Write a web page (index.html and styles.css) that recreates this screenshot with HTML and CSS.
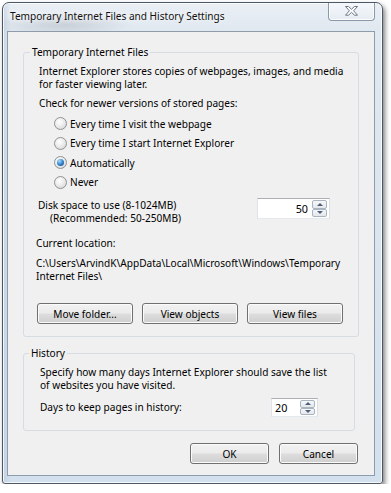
FILE: index.html
```html
<!DOCTYPE html>
<html lang="en">
<head>
<meta charset="utf-8">
<title>Temporary Internet Files and History Settings</title>
<link rel="stylesheet" href="styles.css">
</head>
<body>
<div class="window">
  <div class="titlebar">
    <span class="title">Temporary Internet Files and History Settings</span>
    <div class="close">
      <svg width="13" height="10" viewBox="0 0 13 10" aria-hidden="true">
        <polygon points="0.5,0.5 3.5,0.5 6.5,3.2 9.5,0.5 12.5,0.5 8.6,4.8 12.5,9.2 9.5,9.2 6.5,6.4 3.5,9.2 0.5,9.2 4.4,4.8" fill="#fff" stroke="#6b7585" stroke-width="1" stroke-linejoin="round"/>
      </svg>
    </div>
  </div>
  <div class="client">
    <fieldset class="group group-tif">
      <legend>Temporary Internet Files</legend>
      <div class="group-body tif-body">
        <p class="desc">Internet Explorer stores copies of webpages, images, and media<br>for faster viewing later.</p>
        <p class="check">Check for newer versions of stored pages:</p>
        <div class="radios">
          <div class="radio"><span class="dot"></span>Every time I visit the webpage</div>
          <div class="radio"><span class="dot"></span>Every time I start Internet Explorer</div>
          <div class="radio"><span class="dot on"></span>Automatically</div>
          <div class="radio"><span class="dot"></span>Never</div>
        </div>
        <div class="disk-row">
          <div class="disk-label">
            <div>Disk space to use (8-1024MB)</div>
            <div class="rec">(Recommended: 50-250MB)</div>
          </div>
          <div class="spin spin-disk">
            <span class="val">50</span>
            <span class="arrows"><span class="arrow up"></span><span class="arrow down"></span></span>
          </div>
        </div>
        <p class="loc-label">Current location:</p>
        <p class="path">C:\Users\ArvindK\AppData\Local\Microsoft\Windows\Temporary<br>Internet Files\</p>
        <div class="btn-row">
          <button class="btn wide">Move folder...</button>
          <button class="btn wide">View objects</button>
          <button class="btn wide">View files</button>
        </div>
      </div>
    </fieldset>
    <fieldset class="group group-hist">
      <legend>History</legend>
      <div class="group-body hist-body">
        <p class="desc">Specify how many days Internet Explorer should save the list<br>of websites you have visited.</p>
        <div class="days-row">
          <span class="days-label">Days to keep pages in history:</span>
          <div class="spin spin-days">
            <span class="val">20</span>
            <span class="arrows"><span class="arrow up"></span><span class="arrow down"></span></span>
          </div>
        </div>
      </div>
    </fieldset>
    <div class="actions">
      <button class="btn dlg">OK</button>
      <button class="btn dlg">Cancel</button>
    </div>
  </div>
</div>
</body>
</html>
```

FILE: styles.css
```css
* { box-sizing: border-box; }

body {
  margin: 0;
  background: #ffffff;
  font-family: "Noto Sans", "Open Sans", sans-serif;
  font-size: 10.1px;
  color: #000;
}

.window {
  margin: 2px 0 0 2px;
  width: 381px;
  height: 482px;
  border: 1px solid #4d5866;
  border-radius: 7px 7px 3px 3px;
  background:
    radial-gradient(ellipse 70px 12px at 60px 22px, rgba(150, 158, 168, 0.35), rgba(150, 158, 168, 0) 100%),
    linear-gradient(90deg, rgba(170, 190, 212, 0.45) 0, rgba(170, 190, 212, 0) 8px),
    linear-gradient(180deg, #eaeff5 0, #e0e8f0 28px, #d3e0ed 100%);
  box-shadow: 2px 3px 5px rgba(0, 0, 0, 0.5), inset 0 0 0 1px rgba(255, 255, 255, 0.8);
  padding: 0 7px 7px 4px;
  display: flex;
  flex-direction: column;
}

.titlebar {
  height: 28px;
  flex: none;
  display: flex;
  justify-content: space-between;
  align-items: flex-start;
}

.title {
  padding-left: 3px;
  line-height: 26px;
  font-size: 10.1px;
  color: #111;
  text-shadow: 0 0 5px #fff, 0 0 9px rgba(255, 255, 255, 0.9);
}

.close {
  width: 47px;
  height: 18px;
  border: 1px solid #8c99a8;
  border-top: 0;
  border-radius: 0 0 4px 4px;
  background: linear-gradient(180deg, #f5f8fb 0, #e6ecf2 100%);
  box-shadow: inset 0 -1px 0 rgba(255, 255, 255, 0.9), inset 1px 0 0 rgba(255, 255, 255, 0.7), inset -1px 0 0 rgba(255, 255, 255, 0.7);
  display: flex;
  align-items: center;
  justify-content: center;
  padding-bottom: 1px;
}

.client {
  flex: 1;
  background: #f0f0f0;
  border: 1px solid #8e9bab;
  display: flex;
  flex-direction: column;
}

.group {
  border: 1px solid #d5dde3;
  border-radius: 3px;
  padding: 0;
  min-width: 0;
}

.group legend {
  padding: 0 2px;
  line-height: 13px;
}

.group-tif { margin: 14px 15px 0 15px; }
.group-tif legend { margin-left: 6px; }

.group-hist { margin: 10px 19px 0 15px; }
.group-hist legend { margin-left: 5px; }

p { margin: 0; }

.tif-body { padding: 6px 28px 12px 15px; }

.desc, .check, .loc-label { line-height: 13px; white-space: nowrap; }

.check { margin-top: 6px; }

.radios {
  margin-top: 4px;
  padding-left: 15px;
}

.radio {
  height: 19.5px;
  display: flex;
  align-items: center;
}

.dot {
  width: 13px;
  height: 13px;
  flex: none;
  border-radius: 50%;
  border: 1px solid #8f9294;
  background: radial-gradient(circle at 40% 35%, #ffffff 0, #ececec 45%, #cdd0d3 100%);
  margin-right: 3px;
  display: flex;
  align-items: center;
  justify-content: center;
}

.dot.on::after {
  content: "";
  width: 7px;
  height: 7px;
  border-radius: 50%;
  background: radial-gradient(circle at 35% 30%, #a8dcff 0, #3d8fd4 45%, #123f72 100%);
}

.disk-row {
  margin-top: 7px;
  display: flex;
  justify-content: space-between;
  align-items: flex-start;
}

.disk-label {
  margin-left: -1px;
  line-height: 12.5px;
}

.disk-label .rec { padding-left: 12px; }

.spin {
  display: flex;
  align-items: stretch;
  background: #fff;
  border: 1px solid;
  border-color: #abadb3 #dbdfe6 #e3e9ef #e2e3ea;
  flex: none;
}

.spin-disk {
  width: 73px;
  height: 21px;
  margin-top: -1px;
  padding: 1px 2px 1px 0;
}

.spin-disk .val {
  flex: 1;
  text-align: right;
  padding-right: 4px;
  align-self: center;
  font-size: 10.8px;
}

.spin-days {
  width: 47px;
  height: 19px;
  padding: 1px 2px 1px 3px;
}

.spin-days .val {
  flex: 1;
  align-self: center;
  font-size: 10.8px;
}

.arrows {
  width: 15px;
  display: flex;
  flex-direction: column;
}

.arrow {
  flex: 1;
  border: 1px solid #aab4bf;
  border-radius: 2px;
  background: linear-gradient(180deg, #f6f7f8 0, #e4e8ec 100%);
  display: flex;
  align-items: center;
  justify-content: center;
}

.arrow.up::after {
  content: "";
  border-left: 3px solid transparent;
  border-right: 3px solid transparent;
  border-bottom: 3px solid #4c5e7c;
}

.arrow.down::after {
  content: "";
  border-left: 3px solid transparent;
  border-right: 3px solid transparent;
  border-top: 3px solid #4c5e7c;
}

.loc-label {
  margin: 13px 0 0 -3px;
}

.path {
  margin: 7px 0 0 -3px;
  line-height: 12.5px;
  white-space: nowrap;
}

.btn-row {
  margin: 21px 0 0 -2px;
  display: flex;
  gap: 9px;
}

.btn {
  font: inherit;
  color: #000;
  height: 21px;
  padding: 0;
  flex: none;
  border: 1px solid #707070;
  border-radius: 3px;
  background: linear-gradient(180deg, #f2f2f2 0%, #ebebeb 48%, #dddddd 52%, #cfcfcf 100%);
  box-shadow: inset 0 0 0 1px #fbfbfb;
}

.btn.wide { width: 96px; }
.btn.dlg { width: 79px; }

.hist-body { padding: 6px 36px 13px 16px; }

.days-row {
  margin-top: 6px;
  display: flex;
  justify-content: space-between;
  align-items: center;
}

.days-label { line-height: 19px; }

.actions {
  margin: 12px 16px 0 0;
  display: flex;
  justify-content: flex-end;
  gap: 10px;
}
```
